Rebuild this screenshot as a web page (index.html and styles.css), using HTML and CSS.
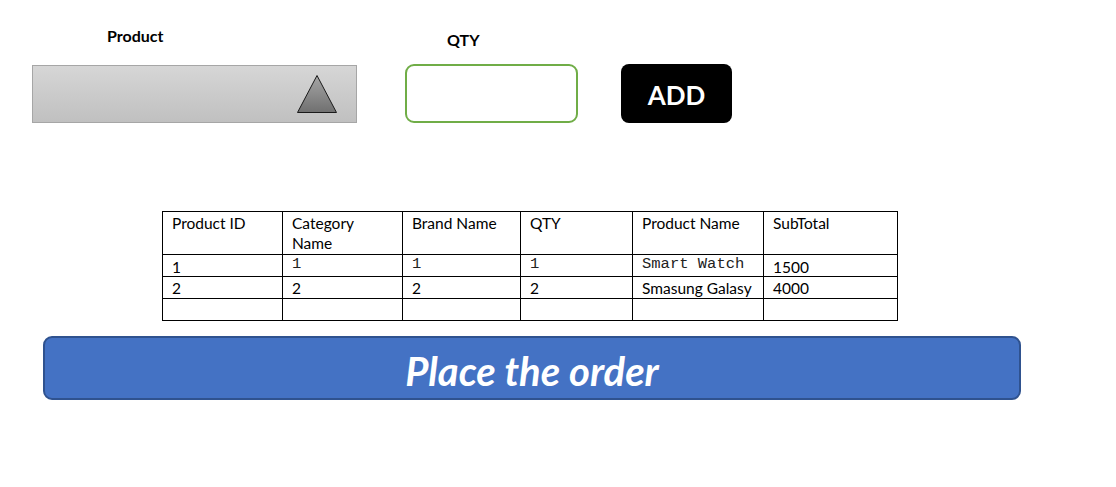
FILE: index.html
```html
<!DOCTYPE html>
<html>
<head>
<title>Order</title>
<link rel="stylesheet" href="styles.css">
</head>
<body>
<div class="page">
  <div class="form-row">
    <div class="field product-field">
      <div class="label product-label">Product</div>
      <div class="select-box">
        <svg class="arrow" width="42" height="40" viewBox="0 0 42 40">
          <defs>
            <linearGradient id="tri" x1="0" y1="0" x2="0" y2="1">
              <stop offset="0" stop-color="#a6a6a6"/>
              <stop offset="1" stop-color="#707070"/>
            </linearGradient>
          </defs>
          <polygon points="21,1.5 40.5,38.5 1.5,38.5" fill="url(#tri)" stroke="#1a1a1a" stroke-width="1"/>
        </svg>
      </div>
    </div>
    <div class="field qty-field">
      <div class="label qty-label">QTY</div>
      <div class="qty-input"></div>
    </div>
    <div class="field add-field">
      <button class="add-btn">ADD</button>
    </div>
  </div>

  <table class="items">
    <tr class="head">
      <td class="c1">Product ID</td>
      <td class="c2">Category<br>Name</td>
      <td class="c3">Brand Name</td>
      <td class="c4">QTY</td>
      <td class="c5">Product Name</td>
      <td class="c6">SubTotal</td>
    </tr>
    <tr>
      <td class="low">1</td>
      <td class="mono">1</td>
      <td class="mono">1</td>
      <td class="mono">1</td>
      <td class="mono">Smart Watch</td>
      <td class="low">1500</td>
    </tr>
    <tr>
      <td>2</td>
      <td>2</td>
      <td>2</td>
      <td>2</td>
      <td>Smasung Galasy</td>
      <td>4000</td>
    </tr>
    <tr>
      <td></td><td></td><td></td><td></td><td></td><td></td>
    </tr>
  </table>

  <button class="order-btn">Place the order</button>
</div>
</body>
</html>
```

FILE: styles.css
```css
body {
    margin: 0;
    padding: 0;
    background: #fff;
    font-family: Lato, "Open Sans", sans-serif;
    color: #000;
}

.page {
    padding: 0 0 0 32px;
}

.form-row {
    display: flex;
    align-items: flex-end;
    height: 123px;
}

.field {
    display: flex;
    flex-direction: column;
}

.label {
    font-weight: bold;
    font-size: 16px;
    line-height: 18px;
}

.product-label {
    margin-left: 75px;
    margin-bottom: 20px;
}

.qty-label {
    margin-left: 42px;
    margin-bottom: 15px;
}

.select-box {
    width: 323px;
    height: 56px;
    border: 1px solid #a6a6a6;
    background: linear-gradient(#d6d6d6, #c0c0c0);
    display: flex;
    justify-content: flex-end;
    align-items: center;
}

.arrow {
    margin-right: 18px;
}

.qty-field {
    margin-left: 48px;
}

.qty-input {
    width: 169px;
    height: 55px;
    border: 2px solid #70ad47;
    border-radius: 9px;
    background: #fff;
}

.add-field {
    margin-left: 43px;
}

.add-btn {
    width: 111px;
    height: 59px;
    border: none;
    border-radius: 8px;
    background: #000;
    color: #fff;
    font-family: Lato, "Open Sans", sans-serif;
    font-weight: bold;
    font-size: 26px;
    padding: 2px 0 0;
}

.items {
    border-collapse: collapse;
    margin: 88px 0 0 130px;
    font-size: 15.5px;
    line-height: 20px;
}

.items td {
    border: 1px solid #000;
    padding: 1px 9px 0;
    vertical-align: top;
}

.items .head td {
    padding-bottom: 1px;
}

.items tr:last-child td {
    height: 21px;
    padding: 0;
}

.c1 { width: 101px; }
.c2 { width: 101px; }
.c3 { width: 99px; }
.c4 { width: 93px; }
.c5 { width: 112px; }
.c6 { width: 115px; }

.items td.mono {
    font-family: "Liberation Mono", monospace;
    font-size: 15.5px;
    line-height: 17px;
    padding-bottom: 3px;
    color: #222;
}

.items td.low {
    padding-top: 3px;
    line-height: 18px;
}

.order-btn {
    display: block;
    margin: 15px 0 0 11px;
    width: 978px;
    height: 64px;
    background: #4472c4;
    border: 2px solid #2f528f;
    border-radius: 9px;
    color: #fff;
    font-family: Lato, "Open Sans", sans-serif;
    font-weight: bold;
    font-style: italic;
    font-size: 40px;
    padding: 5px 0 0;
}
```
